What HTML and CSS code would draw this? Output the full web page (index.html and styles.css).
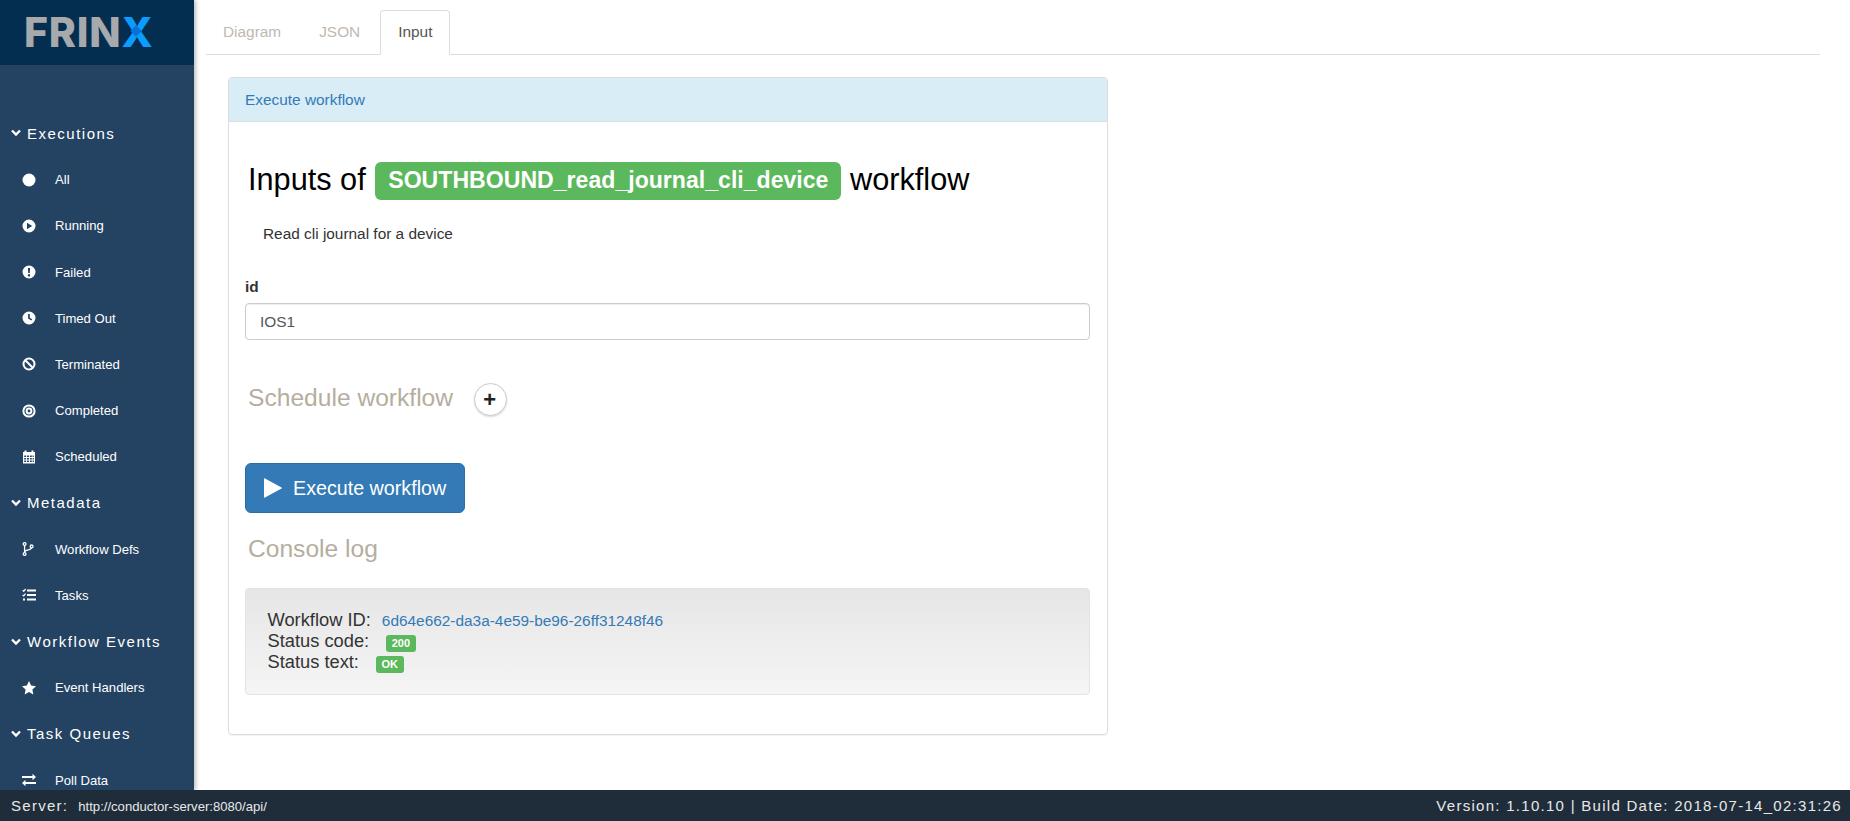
FILE: index.html
```html
<!DOCTYPE html>
<html lang="en">
<head>
<meta charset="UTF-8">
<title>Workflow input</title>
<link rel="stylesheet" href="styles.css">
</head>
<body>
<div class="app">
  <aside class="sidebar">
    <div class="logo"><span class="logo-text">FRIN<span class="logo-x">X</span></span></div>
    <nav class="menu">
      <div class="menu-head"><svg class="chev" viewBox="0 0 10 8"><path d="M1 1.5 5 5.500 9 1.500" /></svg>Executions</div>
      <a class="menu-item"><svg class="ico" viewBox="0 0 14 14"><circle cx="7" cy="7" r="6.5" /></svg>All</a>
      <a class="menu-item"><svg class="ico" viewBox="0 0 14 14"><path fill-rule="evenodd" d="M7 .5a6.500 6.500 0 1 0 0 13 6.500 6.500 0 0 0 0-13zM5 3.800 10.200 7 5 10.200z" /></svg>Running</a>
      <a class="menu-item"><svg class="ico" viewBox="0 0 14 14"><path fill-rule="evenodd" d="M7 .5a6.500 6.500 0 1 0 0 13 6.500 6.500 0 0 0 0-13zM5.900 3h2.200l-.3 5H6.200zM7 9a1.200 1.200 0 1 1 0 2.400A1.200 1.200 0 0 1 7 9z" /></svg>Failed</a>
      <a class="menu-item"><svg class="ico" viewBox="0 0 14 14"><path fill-rule="evenodd" d="M7 .5a6.500 6.500 0 1 0 0 13 6.500 6.500 0 0 0 0-13zM6.100 3h1.700v3.700l2.400 1.600-.9 1.300-3.200-2.100z" /></svg>Timed Out</a>
      <a class="menu-item"><svg class="ico" viewBox="0 0 14 14"><g class="ico-line"><circle cx="7" cy="7" r="5.5" /><path d="M3 3 11 11" /></g></svg>Terminated</a>
      <a class="menu-item"><svg class="ico" viewBox="0 0 14 14"><g class="ico-line"><circle cx="7" cy="7" r="5.6" /><circle cx="7" cy="7" r="2.4" /></g></svg>Completed</a>
      <a class="menu-item"><svg class="ico" viewBox="0 0 14 14"><path fill-rule="evenodd" d="M2.500.5h2V2h5V.5h2V2H13v11.500H1V2h1.500zM2.200 5.500v1.600h1.900V5.500zm2.800 0v1.600h1.900V5.500zm2.900 0v1.600h1.900V5.500zm2.700 0v1.600h1.200V5.500zM2.200 8v1.600h1.900V8zM5 8v1.600h1.900V8zm2.900 0v1.600h1.900V8zm2.700 0v1.600h1.200V8zM2.200 10.400V12h1.900v-1.600zm2.800 0V12h1.900v-1.600zm2.900 0V12h1.900v-1.600zm2.700 0V12h1.200v-1.600z" /></svg>Scheduled</a>
      <div class="menu-head"><svg class="chev" viewBox="0 0 10 8"><path d="M1 1.5 5 5.500 9 1.500" /></svg>Metadata</div>
      <a class="menu-item"><svg class="ico" viewBox="0 0 14 14"><g class="ico-line thin"><circle cx="2.6" cy="2" r="1.4" /><circle cx="2.6" cy="12" r="1.4" /><circle cx="9.6" cy="4.4" r="1.4" /><path d="M2.600 3.400v7.200M9.600 5.800c0 2.600-7 1.600-7 4.400" /></g></svg>Workflow Defs</a>
      <a class="menu-item"><svg class="ico" viewBox="0 0 14 14"><path d="M5 1.400h9v2H5zM5 6h9v2H5zM5 10.600h9v2H5z" /><g class="ico-line tick"><path d="M.6 2.200 1.700 3.300 3.600 1M.6 6.800 1.700 7.900 3.600 5.600" /></g><path d="M1 10.600h2v2H1z" /></svg>Tasks</a>
      <div class="menu-head"><svg class="chev" viewBox="0 0 10 8"><path d="M1 1.5 5 5.500 9 1.500" /></svg>Workflow Events</div>
      <a class="menu-item"><svg class="ico" viewBox="0 0 14 14"><path d="M7 0 9.100 4.600 14 5.200 10.400 8.600 11.300 13.600 7 11.100 2.700 13.600 3.600 8.600 0 5.200 4.900 4.600z" /></svg>Event Handlers</a>
      <div class="menu-head"><svg class="chev" viewBox="0 0 10 8"><path d="M1 1.5 5 5.500 9 1.500" /></svg>Task Queues</div>
      <a class="menu-item"><svg class="ico" viewBox="0 0 14 14"><path d="M0 3h10.500V.8L14 4l-3.500 3.200V5H0zM14 9H3.500V6.800L0 10l3.500 3.200V11H14z" /></svg>Poll Data</a>
    </nav>
  </aside>

  <main class="content">
    <ul class="tabs">
      <li class="tab">Diagram</li>
      <li class="tab">JSON</li>
      <li class="tab active">Input</li>
    </ul>

    <section class="panel">
      <div class="panel-heading">Execute workflow</div>
      <div class="panel-body">
        <h1 class="title">Inputs of <span class="label-name">SOUTHBOUND_read_journal_cli_device</span> workflow</h1>
        <p class="descr">Read cli journal for a device</p>

        <label class="field-label" for="id">id</label>
        <input class="field" id="id" type="text" value="IOS1">

        <div class="schedule">
          <h2 class="sub">Schedule workflow</h2>
          <button class="round-btn" type="button">+</button>
        </div>

        <button class="run-btn" type="button"><svg class="run-ico" viewBox="0 0 18 20"><path d="M0 1v18q0 1 1 .5L17.500 10.500q.8-.5 0-1L1 .5Q0 0 0 1z" /></svg>Execute workflow</button>

        <h2 class="sub console-title">Console log</h2>
        <div class="well">
          <div class="well-row">Workflow ID: <a class="wf-link">6d64e662-da3a-4e59-be96-26ff31248f46</a></div>
          <div class="well-row">Status code: <span class="badge badge-code">200</span></div>
          <div class="well-row">Status text: <span class="badge badge-text">OK</span></div>
        </div>
      </div>
    </section>
  </main>
</div>

<footer class="footer">
  <div><span class="foot-key">Server:</span><span class="foot-url">http://conductor-server:8080/api/</span></div>
  <div class="foot-key foot-version">Version: 1.10.10 | Build Date: 2018-07-14_02:31:26</div>
</footer>
</body>
</html>
```

FILE: styles.css
```css
* {
    box-sizing: border-box;
}
html, body {
    margin: 0;
    height: 100%;
    overflow: hidden;
}
body {
    font-family: "Liberation Sans", Arial, sans-serif;
    font-size: 15.4px;
    color: #333;
    background: #fff;
    display: flex;
    flex-direction: column;
}
.app {
    display: flex;
    height: 790px;
}

/* sidebar */
.sidebar {
    width: 194px;
    flex: none;
    background: #244362;
    box-shadow: 2px 0 4px rgba(0, 0, 0, 0.25);
    overflow: hidden;
    position: relative;
}
.logo {
    height: 65px;
    background: #042e50;
    padding-left: 24px;
    line-height: 64px;
}
.logo-text {
    font-family: Inter, sans-serif;
    font-weight: 800;
    font-size: 41px;
    letter-spacing: 0.8px;
    color: #a7a9ac;
}
.logo-x {
    color: #0a9cff;
    position: relative;
}
.logo-x::after {
    content: "";
    position: absolute;
    left: 11px;
    top: 20px;
    width: 8px;
    height: 8px;
    background: #0673d6;
    transform: rotate(45deg);
}
.menu {
    padding-top: 45.4px;
}
.menu-head, .menu-item {
    display: flex;
    align-items: center;
    height: 46.2px;
    color: #fff;
}
.menu-head {
    padding-left: 11px;
    font-size: 15px;
    letter-spacing: 1.5px;
}
.chev {
    width: 10px;
    height: 8px;
    margin-right: 6px;
    fill: none;
    stroke: #fff;
    stroke-width: 2.4;
}
.menu-item {
    padding-left: 22px;
    font-size: 13.1px;
}
.ico {
    width: 14px;
    height: 14px;
    margin-right: 19px;
    flex: none;
    fill: #fff;
}
.ico-line {
    fill: none;
    stroke: #fff;
    stroke-width: 2;
}
.ico-line.thin {
    stroke-width: 1.3;
}
.ico-line.tick {
    stroke-width: 1.2;
}

/* tabs */
.content {
    flex: 1;
    padding: 10px 30px 0 12px;
}
.tabs {
    display: flex;
    list-style: none;
    margin: 0;
    padding: 0;
    border-bottom: 1px solid #ddd;
    height: 45px;
}
.tab {
    padding: 0 17px;
    height: 45px;
    line-height: 42px;
    margin-right: 2px;
    color: #bfb9b1;
    border: 1px solid transparent;
}
.tab:first-child {
    margin-left: -1px;
}
.tab.active {
    color: #555;
    background: #fff;
    border: 1px solid #ddd;
    border-bottom-color: #fff;
    border-radius: 4px 4px 0 0;
}

/* panel */
.panel {
    width: 880px;
    height: 658px;
    margin: 22px 0 0 22px;
    border: 1px solid #ddd;
    border-radius: 4px;
    box-shadow: 0 1px 1px rgba(0, 0, 0, 0.05);
}
.panel-heading {
    height: 44px;
    line-height: 43px;
    padding-left: 16px;
    background: #d9edf7;
    border-bottom: 1px solid #ddd;
    border-radius: 3px 3px 0 0;
    color: #337ab7;
}
.panel-body {
    padding: 0 17px 0 16px;
}
.title {
    height: 40px;
    margin: 38px 0 0 3px;
    font-size: 30.7px;
    font-weight: 400;
    line-height: 40px;
    color: #000;
}
.label-name {
    display: inline-block;
    margin: 0 0 0 1px;
    padding: 0 13px;
    height: 38px;
    line-height: 37px;
    vertical-align: 2px;
    font-size: 23.1px;
    font-weight: 700;
    color: #fff;
    background: #5cb85c;
    border-radius: 6px;
}
.descr {
    margin: 23px 0 0 18px;
    line-height: 21px;
}
.field-label {
    display: block;
    margin-top: 32px;
    font-weight: 700;
    line-height: 21px;
}
.field {
    display: block;
    width: 100%;
    height: 37px;
    margin-top: 6px;
    padding: 0 14px;
    font: inherit;
    color: #555;
    border: 1px solid #ccc;
    border-radius: 4px;
    box-shadow: inset 0 1px 1px rgba(0, 0, 0, 0.075);
}
.schedule {
    display: flex;
    align-items: center;
    margin: 40px 0 0 3px;
}
.sub {
    margin: 0;
    font-size: 24.6px;
    font-weight: 400;
    line-height: 28px;
    color: #b5ae9e;
}
.round-btn {
    width: 33px;
    height: 33px;
    margin: 3px 0 0 21px;
    padding: 0 2px 0 0;
    font: 700 22px/28px "Liberation Sans", sans-serif;
    color: #222;
    background: #fff;
    border: 1px solid #ccc;
    border-radius: 50%;
    box-shadow: 0 1px 2px rgba(0, 0, 0, 0.15);
}
.run-btn {
    display: flex;
    align-items: center;
    width: 220px;
    height: 50px;
    margin-top: 47px;
    padding: 0 0 0 18px;
    font: 19.7px "Liberation Sans", sans-serif;
    color: #fff;
    background: #337ab7;
    border: 1px solid #2e6da4;
    border-radius: 6px;
}
.run-ico {
    width: 18px;
    height: 20px;
    margin-right: 11px;
    fill: #fff;
}
.console-title {
    margin: 22px 0 0 3px;
}
.well {
    height: 107px;
    margin-top: 25px;
    padding: 20px 21.5px;
    font-size: 18.3px;
    line-height: 21px;
    background: linear-gradient(to bottom, #e6e6e6, #f5f5f5);
    border: 1px solid #e3e3e3;
    border-radius: 4px;
}
.well-row {
    height: 21px;
}
.wf-link {
    margin-left: 6px;
    font-size: 15.4px;
    color: #337ab7;
}
.badge {
    display: inline-block;
    height: 17px;
    padding: 0 6px;
    font-size: 11px;
    font-weight: 700;
    line-height: 16px;
    color: #fff;
    background: #5cb85c;
    border-radius: 3px;
    vertical-align: 0;
}
.badge-code, .badge-text {
    margin-left: 11.5px;
}

/* footer */
.footer {
    height: 31px;
    display: flex;
    align-items: center;
    justify-content: space-between;
    padding: 0 8px 0 11px;
    background: #1f2d3a;
    color: #e8e8e8;
    position: relative;
}
.foot-key {
    font-size: 15px;
    letter-spacing: 1.28px;
}
.foot-url {
    margin-left: 10px;
    font-size: 13.1px;
}
```
